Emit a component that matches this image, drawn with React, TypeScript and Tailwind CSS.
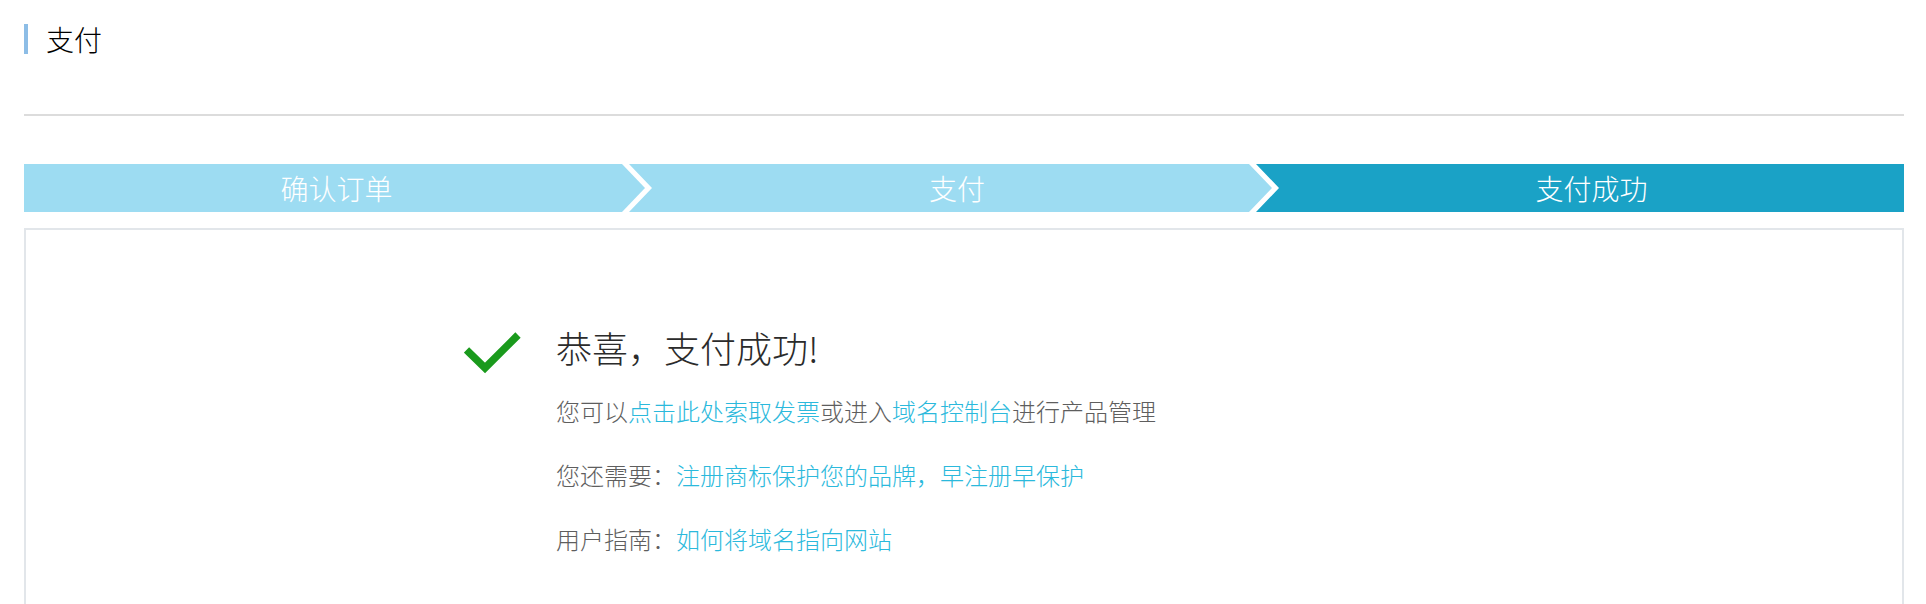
const font = { fontFamily: '"Noto Sans CJK SC", "Noto Sans", sans-serif' };

function CheckMark() {
  return (
    <svg width="60" height="46" viewBox="0 0 60 46" className="shrink-0">
      <polyline
        points="2.5,22 21,40 54,7"
        fill="none"
        stroke="#1a9a1c"
        strokeWidth="7.5"
        strokeLinecap="butt"
        strokeLinejoin="miter"
      />
    </svg>
  );
}

function Steps() {
  return (
    <div className="flex h-12 text-[28px] font-light leading-[48px] text-white">
      <div
        className="flex w-[621px] shrink-0 items-center justify-center bg-[#9ddcf2] pl-[4px]"
        style={{ clipPath: "polygon(0 0, calc(100% - 23px) 0, 100% 50%, calc(100% - 23px) 100%, 0 100%)" }}
      >
        确认订单
      </div>
      <div
        className="-ml-4 flex w-[643px] shrink-0 items-center justify-center bg-[#9ddcf2] pl-[23px] pr-[10px]"
        style={{
          clipPath:
            "polygon(0 0, calc(100% - 23px) 0, 100% 50%, calc(100% - 23px) 100%, 0 100%, 23px 50%)",
        }}
      >
        支付
      </div>
      <div
        className="-ml-4 flex flex-1 items-center justify-center bg-[#1aa2c6] pl-[23px]"
        style={{ clipPath: "polygon(0 0, 100% 0, 100% 100%, 0 100%, 23px 50%)" }}
      >
        支付成功
      </div>
    </div>
  );
}

export default function App() {
  return (
    <main className="min-h-screen bg-white pl-6 pr-[22px] pt-6" style={font}>
      <header className="flex items-center">
        <div className="h-[30px] w-1 bg-[#8dbde6]" />
        <h1 className="ml-[18px] text-[28px] font-light leading-[30px] text-[#000]">支付</h1>
      </header>

      <div className="mt-[60px] h-[2px] bg-[#dcdcdc]" />

      <div className="mt-12">
        <Steps />
      </div>

      <section className="mt-4 border-2 border-[#e2e6ea] pb-16 pt-[93px]">
        <div className="mx-auto flex w-[1000px]">
          <div className="w-[92px] shrink-0 pt-[5px]">
            <CheckMark />
          </div>
          <div className="font-light">
            <h2 className="mb-2 text-[36px] leading-[48px] text-[#2b2b2b]">恭喜，支付成功!</h2>
            <p className="text-[24px] leading-[64px] text-[#5e5e5e]">
              您可以<a className="text-[#2bb9dc]" href="#">点击此处索取发票</a>或进入
              <a className="text-[#2bb9dc]" href="#">域名控制台</a>进行产品管理
            </p>
            <p className="text-[24px] leading-[64px] text-[#5e5e5e]">
              您还需要：<a className="text-[#2bb9dc]" href="#">注册商标保护您的品牌，早注册早保护</a>
            </p>
            <p className="text-[24px] leading-[64px] text-[#5e5e5e]">
              用户指南：<a className="text-[#2bb9dc]" href="#">如何将域名指向网站</a>
            </p>
          </div>
        </div>
      </section>
    </main>
  );
}
